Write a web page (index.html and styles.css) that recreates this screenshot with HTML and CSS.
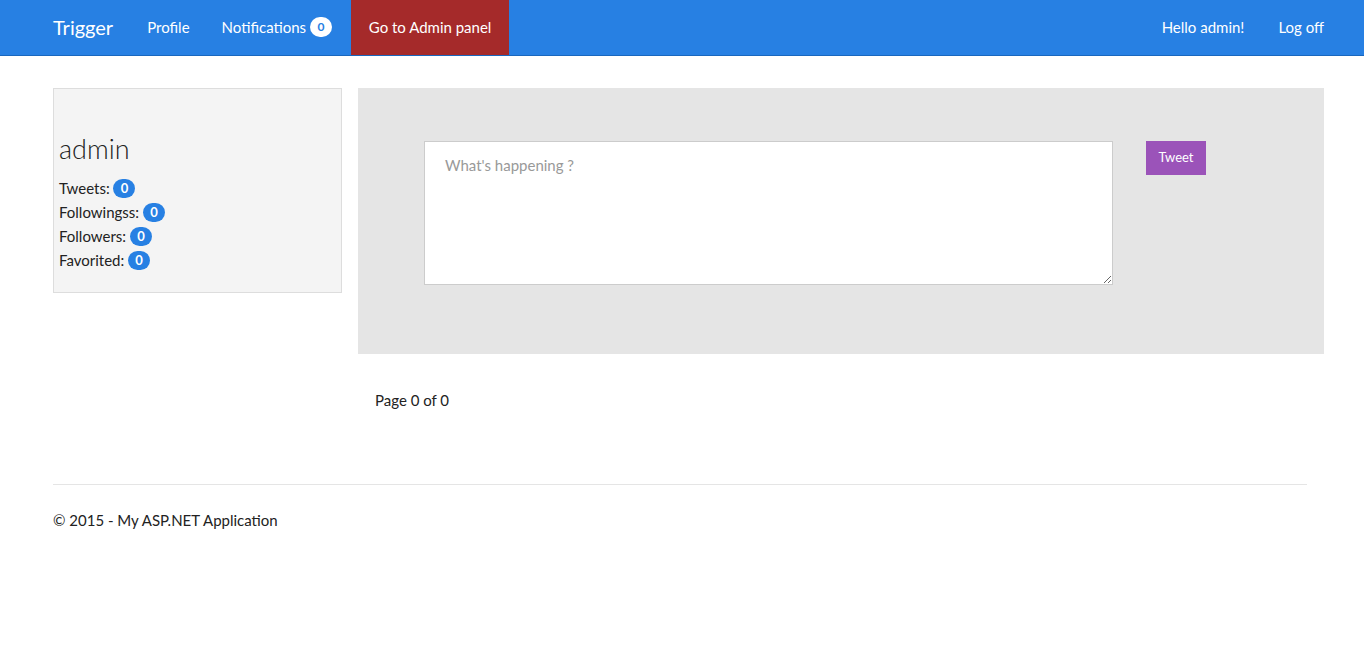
FILE: index.html
```html
<!DOCTYPE html>
<html>
<head>
<meta charset="utf-8">
<title>Trigger</title>
<link rel="stylesheet" href="styles.css">
</head>
<body>
<nav class="navbar">
  <div class="nav-left">
    <a class="brand" href="#">Trigger</a>
    <a class="nav-link" href="#">Profile</a>
    <a class="nav-link" href="#">Notifications<span class="nav-badge">0</span></a>
    <a class="nav-link admin" href="#">Go to Admin panel</a>
  </div>
  <div class="nav-right">
    <a class="nav-link" href="#">Hello admin!</a>
    <a class="nav-link logoff" href="#">Log off</a>
  </div>
</nav>
<div class="page">
  <div class="content">
    <aside class="sidebar">
      <h2 class="username">admin</h2>
      <div class="stat">Tweets: <span class="badge">0</span></div>
      <div class="stat">Followingss: <span class="badge">0</span></div>
      <div class="stat">Followers: <span class="badge">0</span></div>
      <div class="stat">Favorited: <span class="badge">0</span></div>
    </aside>
    <main class="main">
      <div class="compose">
        <textarea class="tweet-box" placeholder="What's happening ?"></textarea>
        <button class="tweet-btn">Tweet</button>
      </div>
      <p class="pager">Page 0 of 0</p>
    </main>
  </div>
  <footer class="footer">
    <p>&copy; 2015 - My ASP.NET Application</p>
  </footer>
</div>
</body>
</html>
```
FILE: styles.css
```css
* { box-sizing: border-box; }
body {
  margin: 0;
  font-family: Lato, "Open Sans", sans-serif;
  font-size: 15px;
  color: #222;
  background: #fff;
}
a { text-decoration: none; }
.navbar {
  height: 56px;
  background: #2780e3;
  border-bottom: 1px solid #1967be;
  display: flex;
  justify-content: space-between;
  padding: 0 40px 0 38px;
}
.nav-left, .nav-right { display: flex; align-items: stretch; }
.brand {
  color: #fff;
  font-size: 20px;
  padding: 0 15px 2px 15px;
  display: flex;
  align-items: center;
  margin-right: 3px;
}
.nav-link {
  color: #fff;
  font-size: 15px;
  padding: 0 16px 2px 16px;
  display: flex;
  align-items: center;
}
.nav-link.admin {
  background: #a52a2a;
  margin-left: 3px;
  padding: 0 17px 2px 17px;
  width: 158px;
  justify-content: center;
}
.nav-badge {
  display: inline-block;
  background: #fff;
  color: #2780e3;
  font-size: 12px;
  font-weight: bold;
  border-radius: 10px;
  width: 22px;
  height: 20px;
  line-height: 20px;
  text-align: center;
  margin-left: 4px;
}
.nav-right .nav-link { padding: 0 17px 2px 17px; }
.nav-right .logoff { padding-right: 0; }
.page { padding: 32px 40px 0 53px; }
.content { display: flex; gap: 16px; align-items: flex-start; }
.sidebar {
  width: 289px;
  flex: none;
  background: #f4f4f4;
  border: 1px solid #ddd;
  padding: 44px 5px 20px 5px;
  min-height: 205px;
}
.username {
  font-size: 27px;
  font-weight: 300;
  margin: 0 0 11px 0;
  line-height: 32px;
  color: #222;
}
.stat { line-height: 24px; }
.badge {
  display: inline-block;
  background: #2780e3;
  color: #fff;
  font-size: 13px;
  font-weight: bold;
  border-radius: 10px;
  min-width: 22px;
  height: 19px;
  line-height: 19px;
  text-align: center;
  vertical-align: 1px;
}
.main { flex: 1; }
.compose {
  background: #e5e5e5;
  padding: 53px 66px 69px 66px;
  display: flex;
  align-items: flex-start;
  gap: 33px;
}
.tweet-box {
  width: 689px;
  height: 144px;
  border: 1px solid #ccc;
  background: #fff;
  padding: 14px 20px;
  font-family: Lato, sans-serif;
  font-size: 15px;
  resize: vertical;
}
.tweet-box::placeholder { color: #999; }
.tweet-btn {
  background: #9b53b9;
  color: #fff;
  border: 0;
  font-family: Lato, sans-serif;
  font-size: 13px;
  width: 60px;
  height: 34px;
  padding: 0 0 2px 0;
}
.pager { margin: 36px 0 0 17px; line-height: 20px; }
.footer {
  margin-top: 74px;
  margin-right: 17px;
  border-top: 1px solid #e5e5e5;
  padding-top: 25px;
}
.footer p { margin: 0; line-height: 20px; }
```
